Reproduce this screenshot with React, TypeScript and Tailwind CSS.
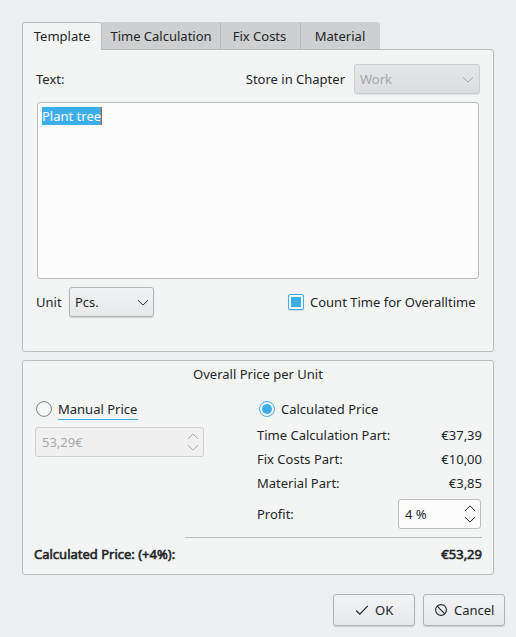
import React from "react";

function Chevron({ up = false, className = "" }: { up?: boolean; className?: string }) {
  return (
    <svg width="12" height="7" viewBox="0 0 12 7" className={`shrink-0 ${className}`} fill="none" stroke="currentColor" strokeWidth="1">
      <path d={up ? "M1 5.8 L6 0.9 L11 5.8" : "M1 1.2 L6 6.1 L11 1.2"} />
    </svg>
  );
}

function Tab({ label, className }: { label: string; className: string }) {
  return <div className={`flex h-[27px] justify-center bg-[#cdcfd0] pt-[5px] ${className}`}>{label}</div>;
}

function PriceRow({ label, value }: { label: string; value: string }) {
  return (
    <div className="flex h-6 items-center justify-between">
      <span>{label}</span>
      <span>{value}</span>
    </div>
  );
}

const button =
  "flex h-8 w-[82px] items-center rounded-[3px] border border-[#b1b3b5] bg-linear-to-b from-[#f1f2f3] to-[#e8e9ea] shadow-[0_1px_1px_rgba(0,0,0,0.16)]";

export default function App() {
  return (
    <div className="h-[637px] w-[516px] overflow-hidden whitespace-nowrap bg-[#eeeff1] pl-[22px] pt-[22px] font-['Noto_Sans',sans-serif] text-[13px] leading-[18px] text-[#232629]">
      <div className="flex h-[27px]">
        <div className="relative z-10 flex h-7 w-20 justify-center rounded-t-[3px] border border-b-0 border-[#babcbd] bg-[#f3f5f4] pt-1">
          Template
        </div>
        <Tab label="Time Calculation" className="w-[119px] border-r border-[#b5b7b9]" />
        <Tab label="Fix Costs" className="w-20 border-r border-[#b5b7b9] pr-[2px]" />
        <Tab label="Material" className="w-[79px] rounded-tr-[3px] pr-[1px]" />
      </div>
      <div className="h-[303px] w-[472px] rounded-[3px] rounded-tl-none border border-[#babcbd] bg-[#f3f5f4] px-3.5 pt-3.5">
        <div className="flex h-[30px] items-center">
          <span className="-ml-px">Text:</span>
          <span className="ml-auto">Store in Chapter</span>
          <div className="-mr-px ml-[9px] flex h-[30px] w-[126px] items-center justify-between rounded-[3px] border border-[#cccecf] bg-linear-to-b from-[#e5e6e7] to-[#dcddde] pl-[5px] pr-[5px] text-[#a5a7a8] shadow-[0_1px_1px_rgba(0,0,0,0.07)]">
            Work
            <Chevron />
          </div>
        </div>
        <div className="mt-2 h-[177px] w-[442px] rounded-[3px] border border-[#babcbd] bg-[#fcfcfc] pl-1 pt-1">
          <span className="inline-block h-[18px] w-[60px] border-r border-[#b85a30] bg-[#3daee9] text-[#fcfcfc]">Plant tree</span>
        </div>
        <div className="mt-2 flex h-[30px] items-center">
          <span className="-ml-px w-[33px]">Unit</span>
          <div className="flex h-[30px] w-[85px] items-center justify-between rounded-[3px] border border-[#b1b3b5] bg-linear-to-b from-[#f1f2f3] to-[#e7e8ea] pl-[5px] pr-1 shadow-[0_1px_1px_rgba(0,0,0,0.16)]">
            Pcs.
            <Chevron />
          </div>
          <div className="ml-[134px] flex h-4 w-4 items-center justify-center rounded-[2px] border border-[#3daee9] bg-[#f6f8f8] shadow-[0_1px_1px_rgba(0,0,0,0.15)]">
            <div className="h-2.5 w-2.5 bg-[#3daee9]" />
          </div>
          <span className="ml-1.5">Count Time for Overalltime</span>
        </div>
      </div>

      <div className="mt-2 h-[215px] w-[472px] rounded-[3px] border border-[#babcbd] bg-[#f3f5f4] pt-1">
        <div className="text-center">Overall Price per Unit</div>
        <div className="mt-[13px] flex">
          <div className="w-[234px] pl-3">
            <div className="flex h-[26px] items-center pl-px">
              <svg width="16" height="16" viewBox="0 0 16 16" className="mt-[-1px] shrink-0">
                <circle cx="8" cy="8" r="7.4" fill="#f6f8f8" stroke="#7c7f81" />
              </svg>
              <span className="ml-1.5 h-[22px] w-20 border-b border-[#3daee9] pt-[2px]">Manual Price</span>
            </div>
            <div className="mt-[5px] flex h-[30px] w-[169px] items-center justify-between rounded-[3px] border border-[#cfd1d1] bg-[#f0f0f0] pl-1.5 pr-1 text-[#a8aaab]">
              53,29€
              <div className="flex flex-col gap-1">
                <Chevron up />
                <Chevron />
              </div>
            </div>
          </div>
          <div className="w-[225px]">
            <div className="flex h-[26px] items-center pl-[2px]">
              <svg width="16" height="16" viewBox="0 0 16 16" className="mt-[-1px] shrink-0">
                <circle cx="8" cy="8" r="7.5" fill="#f6f8f8" stroke="#3daee9" />
                <circle cx="8" cy="8" r="5" fill="#3daee9" />
              </svg>
              <span className="ml-1.5">Calculated Price</span>
            </div>
            <div className="h-px" />
            <PriceRow label="Time Calculation Part:" value="€37,39" />
            <PriceRow label="Fix Costs Part:" value="€10,00" />
            <PriceRow label="Material Part:" value="€3,85" />
            <div className="mt-1 flex h-[30px] items-center justify-between">
              <span>Profit:</span>
              <div className="mr-[1px] flex h-[30px] w-[83px] items-center justify-between rounded-[3px] border border-[#babcbd] bg-[#fcfcfc] pl-1.5 pr-1">
                4 %
                <div className="flex flex-col gap-1">
                  <Chevron up />
                  <Chevron />
                </div>
              </div>
            </div>
          </div>
        </div>
        <div className="ml-[162px] mt-2 h-px w-[297px] bg-[#babcbd]" />
        <div className="mt-[7px] flex justify-between pl-[11px] pr-[11px] [-webkit-text-stroke:0.6px_#232629]">
          <span>Calculated Price: (+4%):</span>
          <span>€53,29</span>
        </div>
      </div>

      <div className="mt-[19px] flex gap-2 pl-[311px]">
        <div className={`${button} pl-[21px]`}>
          <svg width="14" height="12" viewBox="0 0 14 12" fill="none" stroke="#232629" strokeWidth="1.2">
            <path d="M1.2 6.5 L4.8 10.2 L12.8 1.8" />
          </svg>
          <span className="ml-1.5">OK</span>
        </div>
        <div className={`${button} pl-[11px]`}>
          <svg width="12" height="12" viewBox="0 0 12 12" fill="none" stroke="#232629" strokeWidth="1.1">
            <circle cx="6" cy="6" r="5.4" />
            <path d="M2.2 2.2 L9.8 9.8" />
          </svg>
          <span className="ml-[7px]">Cancel</span>
        </div>
      </div>
    </div>
  );
}
